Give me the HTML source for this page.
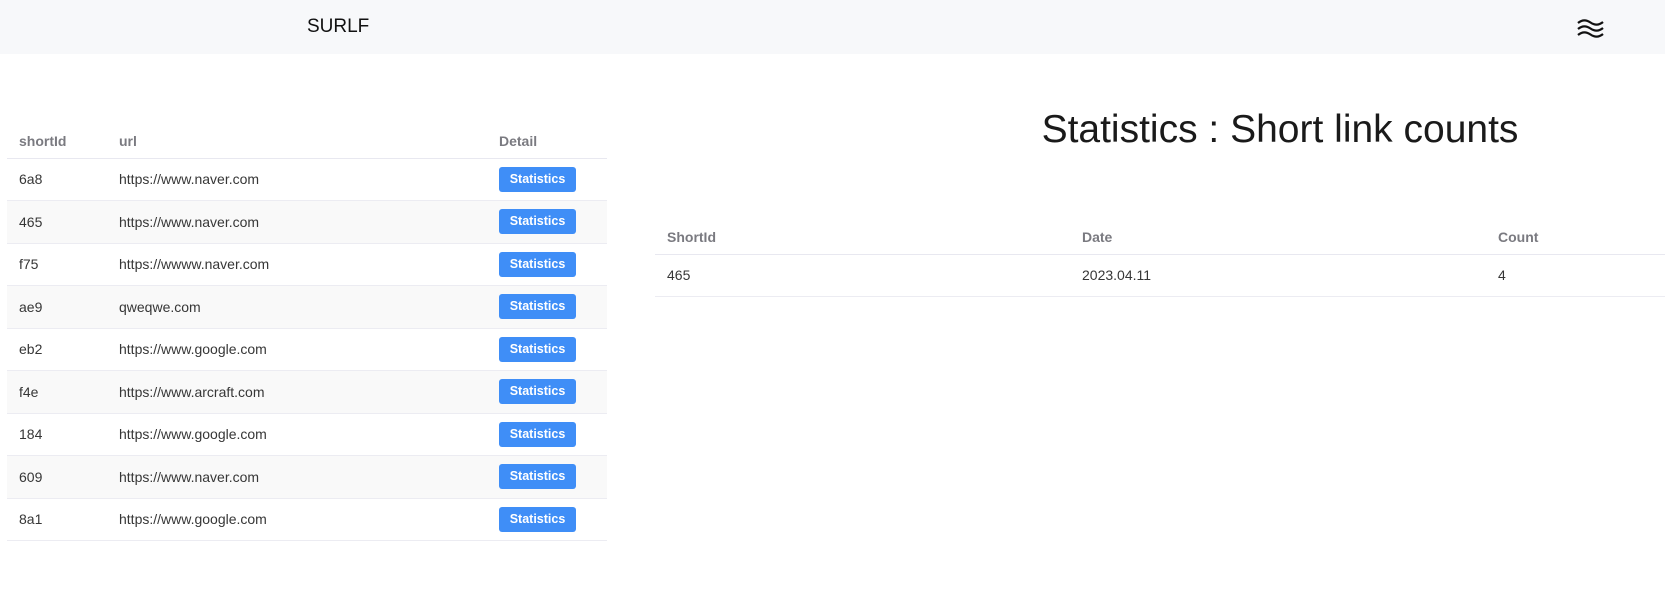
<!DOCTYPE html>
<html><head><meta charset="utf-8"><style>
*{box-sizing:border-box}
body{margin:0;width:1665px;height:605px;overflow:hidden;background:#fff;font-family:"Liberation Sans",sans-serif;color:#363636}
.nav{position:absolute;left:0;top:0;width:1665px;height:54px;background:#f7f8fa}
.brand{position:absolute;left:307px;top:16px;font-size:19px;color:#111}
.icon{position:absolute;left:1577px;top:19px}
table{border-collapse:collapse;position:absolute;font-size:14px}
th{color:#7a7a80;font-weight:bold;text-align:left;height:42px;padding:8px 0 0 0;border-bottom:1.5px solid #e8e8f0}
td{height:42.5px;border-bottom:1.5px solid #ececf2;padding:0}
.l{left:7px;top:116px;width:600px}
.l tr:nth-child(odd):not(:first-child) td{background:#f9f9f9}
.btn{display:inline-block;background:#3f8ef7;color:#fff;font-size:12.5px;font-weight:bold;width:77px;height:25px;line-height:25px;text-align:center;border-radius:3px}
.r{left:655px;top:212px;width:1010px}
h1{position:absolute;left:1000px;width:560px;text-align:center;top:108px;margin:0;font-size:39px;font-weight:normal;color:#1a1a1a}
</style></head><body>
<div class="nav"><div class="brand">SURLF</div>
<svg class="icon" width="27" height="19" viewBox="0 0 27 19" fill="none" stroke="#111" stroke-width="2.2"><path d="M1 4 Q7 -1 13.5 3.5 T26 3"/><path d="M1 10 Q7 5 13.5 9.5 T26 9"/><path d="M1 16 Q7 11 13.5 15.5 T26 15"/></svg>
</div>
<table class="l">
<tr><th style="width:112px;padding-left:12px">shortId</th><th style="width:380px">url</th><th>Detail</th></tr>
<tr><td style="padding-left:12px">6a8</td><td>https://www.naver.com</td><td><span class="btn">Statistics</span></td></tr>
<tr><td style="padding-left:12px">465</td><td>https://www.naver.com</td><td><span class="btn">Statistics</span></td></tr>
<tr><td style="padding-left:12px">f75</td><td>https://wwww.naver.com</td><td><span class="btn">Statistics</span></td></tr>
<tr><td style="padding-left:12px">ae9</td><td>qweqwe.com</td><td><span class="btn">Statistics</span></td></tr>
<tr><td style="padding-left:12px">eb2</td><td>https://www.google.com</td><td><span class="btn">Statistics</span></td></tr>
<tr><td style="padding-left:12px">f4e</td><td>https://www.arcraft.com</td><td><span class="btn">Statistics</span></td></tr>
<tr><td style="padding-left:12px">184</td><td>https://www.google.com</td><td><span class="btn">Statistics</span></td></tr>
<tr><td style="padding-left:12px">609</td><td>https://www.naver.com</td><td><span class="btn">Statistics</span></td></tr>
<tr><td style="padding-left:12px">8a1</td><td>https://www.google.com</td><td><span class="btn">Statistics</span></td></tr>
</table>
<h1>Statistics : Short link counts</h1>
<table class="r">
<tr><th style="width:427px;padding-left:12px">ShortId</th><th style="width:416px">Date</th><th>Count</th></tr>
<tr><td style="padding-left:12px">465</td><td>2023.04.11</td><td>4</td></tr>
</table>
</body></html>
